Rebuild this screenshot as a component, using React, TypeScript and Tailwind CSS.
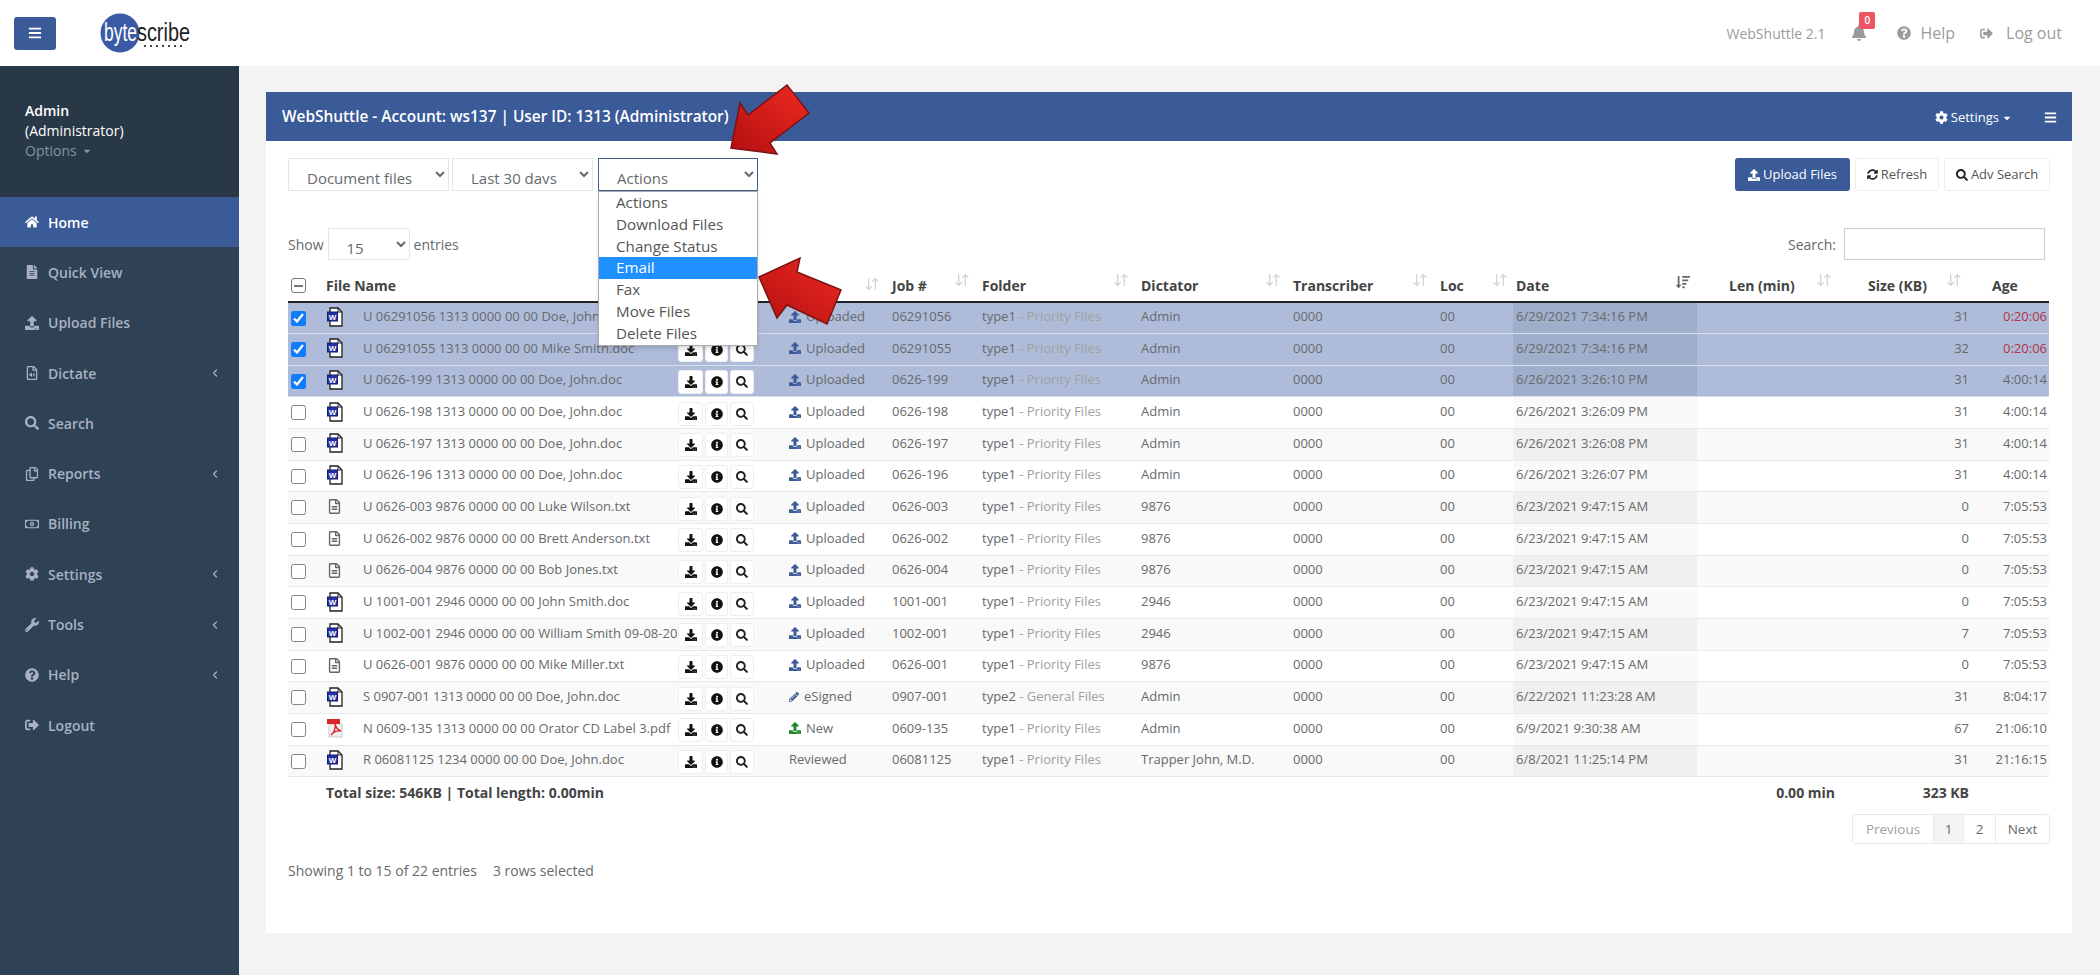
import React from 'react'
import { ArrowDownUp, ChevronLeft } from 'lucide-react'
import {
  FaBars, FaBell, FaCaretDown, FaCog, FaDownload, FaFileAlt, FaHome, FaInfoCircle, FaPencilAlt,
  FaQuestionCircle, FaRegCopy, FaRegFileAlt, FaRegFileAudio, FaRegMoneyBillAlt, FaSearch, FaSignOutAlt,
  FaSortAmountDown, FaSyncAlt, FaUpload, FaWrench,
} from 'react-icons/fa'

const menu = [
  { label: 'Home', icon: FaHome, active: true },
  { label: 'Quick View', icon: FaFileAlt },
  { label: 'Upload Files', icon: FaUpload },
  { label: 'Dictate', icon: FaRegFileAudio, sub: true },
  { label: 'Search', icon: FaSearch },
  { label: 'Reports', icon: FaRegCopy, sub: true },
  { label: 'Billing', icon: FaRegMoneyBillAlt },
  { label: 'Settings', icon: FaCog, sub: true },
  { label: 'Tools', icon: FaWrench, sub: true },
  { label: 'Help', icon: FaQuestionCircle, sub: true },
  { label: 'Logout', icon: FaSignOutAlt },
]

type Row = {
  name: string
  kind: 'doc' | 'txt' | 'pdf'
  status: string
  job: string
  type: string
  dictator: string
  transcriber: string
  date: string
  size: string
  age: string
  selected?: boolean
}

const rows: Row[] = [
  { name: 'U 06291056 1313 0000 00 00 Doe, John.doc', kind: 'doc', status: 'Uploaded', job: '06291056', type: 'type1 ', dictator: 'Admin', transcriber: '0000', date: '6/29/2021 7:34:16 PM', size: '31', age: '0:20:06', selected: true },
  { name: 'U 06291055 1313 0000 00 00 Mike Smith.doc', kind: 'doc', status: 'Uploaded', job: '06291055', type: 'type1 ', dictator: 'Admin', transcriber: '0000', date: '6/29/2021 7:34:16 PM', size: '32', age: '0:20:06', selected: true },
  { name: 'U 0626-199 1313 0000 00 00 Doe, John.doc', kind: 'doc', status: 'Uploaded', job: '0626-199', type: 'type1 ', dictator: 'Admin', transcriber: '0000', date: '6/26/2021 3:26:10 PM', size: '31', age: '4:00:14', selected: true },
  { name: 'U 0626-198 1313 0000 00 00 Doe, John.doc', kind: 'doc', status: 'Uploaded', job: '0626-198', type: 'type1 ', dictator: 'Admin', transcriber: '0000', date: '6/26/2021 3:26:09 PM', size: '31', age: '4:00:14' },
  { name: 'U 0626-197 1313 0000 00 00 Doe, John.doc', kind: 'doc', status: 'Uploaded', job: '0626-197', type: 'type1 ', dictator: 'Admin', transcriber: '0000', date: '6/26/2021 3:26:08 PM', size: '31', age: '4:00:14' },
  { name: 'U 0626-196 1313 0000 00 00 Doe, John.doc', kind: 'doc', status: 'Uploaded', job: '0626-196', type: 'type1 ', dictator: 'Admin', transcriber: '0000', date: '6/26/2021 3:26:07 PM', size: '31', age: '4:00:14' },
  { name: 'U 0626-003 9876 0000 00 00 Luke Wilson.txt', kind: 'txt', status: 'Uploaded', job: '0626-003', type: 'type1 ', dictator: '9876', transcriber: '0000', date: '6/23/2021 9:47:15 AM', size: '0', age: '7:05:53' },
  { name: 'U 0626-002 9876 0000 00 00 Brett Anderson.txt', kind: 'txt', status: 'Uploaded', job: '0626-002', type: 'type1 ', dictator: '9876', transcriber: '0000', date: '6/23/2021 9:47:15 AM', size: '0', age: '7:05:53' },
  { name: 'U 0626-004 9876 0000 00 00 Bob Jones.txt', kind: 'txt', status: 'Uploaded', job: '0626-004', type: 'type1 ', dictator: '9876', transcriber: '0000', date: '6/23/2021 9:47:15 AM', size: '0', age: '7:05:53' },
  { name: 'U 1001-001 2946 0000 00 00 John Smith.doc', kind: 'doc', status: 'Uploaded', job: '1001-001', type: 'type1 ', dictator: '2946', transcriber: '0000', date: '6/23/2021 9:47:15 AM', size: '0', age: '7:05:53' },
  { name: 'U 1002-001 2946 0000 00 00 William Smith 09-08-2021.doc', kind: 'doc', status: 'Uploaded', job: '1002-001', type: 'type1 ', dictator: '2946', transcriber: '0000', date: '6/23/2021 9:47:15 AM', size: '7', age: '7:05:53' },
  { name: 'U 0626-001 9876 0000 00 00 Mike Miller.txt', kind: 'txt', status: 'Uploaded', job: '0626-001', type: 'type1 ', dictator: '9876', transcriber: '0000', date: '6/23/2021 9:47:15 AM', size: '0', age: '7:05:53' },
  { name: 'S 0907-001 1313 0000 00 00 Doe, John.doc', kind: 'doc', status: 'eSigned', job: '0907-001', type: 'type2 ', dictator: 'Admin', transcriber: '0000', date: '6/22/2021 11:23:28 AM', size: '31', age: '8:04:17' },
  { name: 'N 0609-135 1313 0000 00 00 Orator CD Label 3.pdf', kind: 'pdf', status: 'New', job: '0609-135', type: 'type1 ', dictator: 'Admin', transcriber: '0000', date: '6/9/2021 9:30:38 AM', size: '67', age: '21:06:10' },
  { name: 'R 06081125 1234 0000 00 00 Doe, John.doc', kind: 'doc', status: 'Reviewed', job: '06081125', type: 'type1 ', dictator: 'Trapper John, M.D.', transcriber: '0000', date: '6/8/2021 11:25:14 PM', size: '31', age: '21:16:15' },
]

function WordIcon() {
  return (
    <svg width="18" height="20" viewBox="0 0 18 20">
      <path d="M4 1h8l4 4v14H4z" fill="#fff" stroke="#222" strokeWidth="1.3" />
      <path d="M12 1v4h4" fill="none" stroke="#222" strokeWidth="1" />
      <rect x="1.5" y="5" width="10" height="9" fill="#2231a8" stroke="#141c6b" />
      <text x="6.5" y="12.5" textAnchor="middle" fontSize="8" fontWeight="700" fill="#fff" fontFamily="Liberation Sans, sans-serif">W</text>
    </svg>
  )
}

function PdfIcon() {
  return (
    <svg width="18" height="20" viewBox="0 0 18 20">
      <path d="M3 6h13v13H3z" fill="#f1f1f1" stroke="#c9c9c9" />
      <rect x="1" y="1" width="13" height="5" fill="#d8262c" />
      <path d="M5 17c3-2 5-7 4-11 1 4 3 6 6 7-3-.5-7 .5-10 4z" fill="none" stroke="#d8262c" strokeWidth="1.4" />
    </svg>
  )
}

function FileIcon({ kind }: { kind: Row['kind'] }) {
  if (kind === 'doc') return <WordIcon />
  if (kind === 'pdf') return <PdfIcon />
  return <FaRegFileAlt className="text-[15px] text-[#666] ml-[1px]" />
}

function SortIcon() {
  return <ArrowDownUp size={16} strokeWidth={2} className="text-[#d2d2d2] -mt-[3px]" />
}

function Checkbox({ checked }: { checked?: boolean }) {
  return <input type="checkbox" defaultChecked={checked} className="block w-[15px] h-[15px] accent-[#0075ff] opacity-90" />
}

function StatusCell({ status }: { status: string }) {
  return (
    <span className="flex items-center gap-[5px] pl-[8px] pb-[2px]">
      {status === 'Uploaded' && <FaUpload className="text-[12px] text-[#3a5a98]" />}
      {status === 'New' && <FaUpload className="text-[12px] text-[#1e8a2a]" />}
      {status === 'eSigned' && <FaPencilAlt className="text-[10px] text-[#3a5a98]" />}
      {status}
    </span>
  )
}

function ActionButtons() {
  return (
    <div className="flex gap-[2px] pt-[2px] pl-[1px]">
      <span className="w-[25px] h-[24px] flex items-center justify-center bg-white border border-[#eeeeee] rounded-[3px]">
        <FaDownload className="text-[12px] text-[#111]" />
      </span>
      <span className="w-[23px] h-[24px] flex items-center justify-center bg-white border border-[#eeeeee] rounded-[3px]">
        <FaInfoCircle className="text-[12px] text-[#111]" />
      </span>
      <span className="w-[24px] h-[24px] flex items-center justify-center bg-white border border-[#eeeeee] rounded-[3px]">
        <FaSearch className="text-[12px] text-[#222]" />
      </span>
    </div>
  )
}

function Logo() {
  return (
    <svg width="92" height="44" viewBox="0 0 92 44">
      <circle cx="20" cy="22" r="19.5" fill="#3a5aa5" />
      <text x="4" y="30" textLength="33" lengthAdjust="spacingAndGlyphs" fontSize="25" fill="#fff" fontFamily="Liberation Sans, sans-serif">byte</text>
      <text x="37" y="30" textLength="53" lengthAdjust="spacingAndGlyphs" fontSize="25" fill="#222" fontFamily="Liberation Sans, sans-serif">scribe</text>
      {[44, 50, 56, 62, 68, 74, 80].map((x) => (
        <rect key={x} x={x} y="34" width="2" height="2" fill="#444" />
      ))}
    </svg>
  )
}

export default function App() {
  return (
    <div className="relative w-[2100px] h-[975px] overflow-hidden bg-[#f3f3f4] text-[13px] text-[#676a6c]" style={{ fontFamily: '"Open Sans", sans-serif' }}>
      <header className="h-[66px] bg-white flex items-center justify-between pl-[14px] pr-[38px]">
        <div className="flex items-center gap-[44px]">
          <button className="w-[42px] h-[33px] bg-[#3a5a98] rounded-[3px] flex items-center justify-center text-white">
            <FaBars className="text-[14px]" />
          </button>
          <Logo />
        </div>
        <div className="flex items-center text-[#999c9e]">
          <span className="text-[14px]">WebShuttle 2.1</span>
          <span className="relative ml-[26px] mr-[30px]">
            <FaBell className="text-[16px]" />
            <span className="absolute -top-[13px] left-[8px] w-[16px] h-[17px] rounded-[2px] bg-[#ed5565] text-white text-[10px] font-semibold flex items-center justify-center">0</span>
          </span>
          <FaQuestionCircle className="text-[14px]" />
          <span className="text-[16px] ml-[9px]">Help</span>
          <FaSignOutAlt className="text-[13px] ml-[25px]" />
          <span className="text-[16px] ml-[13px]">Log out</span>
        </div>
      </header>

      <div className="flex h-[909px]">
        <aside className="w-[239px] bg-[#2f4154] shrink-0">
          <div className="h-[131px] bg-[#293846] pl-[25px] pt-[35px] text-[14px] leading-[20px]">
            <div className="font-semibold text-white">Admin</div>
            <div className="font-medium text-white">(Administrator)</div>
            <div className="text-[#8095a8] flex items-center gap-[5px]">Options <FaCaretDown className="text-[10px]" /></div>
          </div>
          <nav>
            {menu.map((item) => (
              <div key={item.label} className={`h-[50.3px] flex items-center pl-[25px] pr-[18px] font-semibold text-[14px] ${item.active ? 'bg-[#3a5a98] text-white' : 'text-[#a7b1c2]'}`}>
                <item.icon className="text-[14px] w-[14px] mr-[9px]" />
                <span className="flex-1">{item.label}</span>
                {item.sub && <ChevronLeft size={12} strokeWidth={2.5} />}
              </div>
            ))}
          </nav>
        </aside>

        <main className="flex-1 pt-[26px] pl-[27px] pr-[28px]">
          <div className="h-[49px] bg-[#3a5a98] text-white flex items-center justify-between pl-[16px] pr-[15px]">
            <span className="text-[15.4px] font-semibold">WebShuttle - Account: ws137 | User ID: 1313 (Administrator)</span>
            <div className="flex items-center pt-[2px]">
              <FaCog className="text-[13px] mr-[3px]" />
              <span className="text-[13px]">Settings</span>
              <FaCaretDown className="text-[10px] ml-[3px]" />
              <FaBars className="text-[13px] ml-[32px]" />
            </div>
          </div>

          <div className="h-[792px] bg-white px-[22px] pt-[17px]">
            <div className="flex justify-between h-[33px]">
              <div className="flex">
                <select className="w-[161px] h-[33px] border border-[#e5e6e7] pl-[14px] pt-[8px] pb-[6px] text-[15px] bg-white">
                  <option>Document files</option>
                </select>
                <select className="w-[141px] h-[33px] ml-[3px] border border-[#e5e6e7] pl-[14px] pt-[8px] pb-[6px] text-[15px] bg-white">
                  <option>Last 30 days</option>
                </select>
                <div className="relative ml-[5px]">
                  <select className="w-[160px] h-[33px] border border-[#3f5f8f] pl-[14px] pt-[8px] pb-[6px] text-[15px] bg-white">
                    <option>Actions</option>
                  </select>
                  <div className="absolute z-10 top-[33px] left-0 w-[160px] bg-white border border-[#aaaaaa] shadow-md text-[15.2px] leading-[21.8px] text-[#555]">
                    {['Actions', 'Download Files', 'Change Status', 'Email', 'Fax', 'Move Files', 'Delete Files'].map((o) => (
                      <div key={o} className={`pl-[17px] ${o === 'Email' ? 'bg-[#1e90ff] text-white' : ''}`}>{o}</div>
                    ))}
                  </div>
                </div>
              </div>
              <div className="flex gap-[5px] text-[13px]">
                <button className="w-[115px] rounded-[3px] bg-[#3a5a98] text-white flex items-center justify-center gap-[3px]">
                  <FaUpload className="text-[12px]" /> Upload Files
                </button>
                <button className="w-[84px] rounded-[3px] border border-[#eeeeee] text-[#555] flex items-center justify-center gap-[3px]">
                  <FaSyncAlt className="text-[11px] text-[#222]" /> Refresh
                </button>
                <button className="w-[106px] rounded-[3px] border border-[#eeeeee] text-[#555] flex items-center justify-center gap-[3px]">
                  <FaSearch className="text-[12px] text-[#222]" /> Adv Search
                </button>
              </div>
            </div>

            <div className="flex justify-between items-center h-[32px] mt-[37px] pr-[5px] text-[14px]">
              <div className="flex items-center">
                Show
                <select className="w-[82px] h-[32px] mx-[4px] border border-[#e5e6e7] pl-[14px] pt-[7px] text-[15px] bg-white">
                  <option>15</option>
                </select>
                entries
              </div>
              <div className="flex items-center gap-[8px]">
                Search:
                <input className="w-[201px] h-[32px] border border-[#cccccc]" />
              </div>
            </div>

            <table className="table-fixed w-[1761px] mt-[10px] border-collapse">
              <colgroup>
                <col className="w-[38px]" />
                <col className="w-[37px]" />
                <col className="w-[314px]" />
                <col className="w-[104px]" />
                <col className="w-[104px]" />
                <col className="w-[90px]" />
                <col className="w-[159px]" />
                <col className="w-[152px]" />
                <col className="w-[147px]" />
                <col className="w-[80px]" />
                <col className="w-[184px]" />
                <col className="w-[163px]" />
                <col className="w-[115px]" />
                <col className="w-[74px]" />
              </colgroup>
              <thead>
                <tr className="h-[32px] border-b-2 border-[#222] text-[#444] text-left text-[14px]">
                  <th className="pl-[3px]">
                    <span className="w-[15px] h-[15px] rounded-[3px] border border-[#777] flex items-center justify-center">
                      <span className="w-[9px] h-[2px] bg-[#777]" />
                    </span>
                  </th>
                  <th colSpan={2} className="font-bold">File Name</th>
                  <th />
                  <th className="font-bold"><span className="flex justify-end pr-[5px]"><SortIcon /></span></th>
                  {['Job #', 'Folder', 'Dictator', 'Transcriber', 'Loc'].map((label) => (
                    <th key={label} className="font-bold pl-[7px]">
                      <span className="flex justify-between items-start pr-[5px]">{label}<SortIcon /></span>
                    </th>
                  ))}
                  <th className="font-bold pl-[3px]">
                    <span className="flex justify-between pr-[7px]">Date<FaSortAmountDown className="text-[14px] text-[#666]" /></span>
                  </th>
                  <th className="font-bold pl-[32px]">
                    <span className="flex justify-between items-start pr-[28px]">Len (min)<SortIcon /></span>
                  </th>
                  <th className="font-bold pl-[8px]">
                    <span className="flex justify-between items-start pr-[13px]">Size (KB)<SortIcon /></span>
                  </th>
                  <th className="font-bold pl-[17px]">Age</th>
                </tr>
              </thead>
              <tbody>
                {rows.map((r, i) => (
                  <tr key={r.job} className={`h-[31.67px] border-b whitespace-nowrap ${r.selected ? 'bg-[#aebcd9] border-[#d8dfec]' : i % 2 === 0 ? 'bg-[#f9f9f9] border-[#e7eaec]' : 'bg-white border-[#e7eaec]'}`}>
                    <td className="pl-[3px]"><Checkbox checked={r.selected} /></td>
                    <td className="pb-[2px]"><FileIcon kind={r.kind} /></td>
                    <td className="overflow-hidden pb-[2px]">{r.name}</td>
                    <td><ActionButtons /></td>
                    <td><StatusCell status={r.status} /></td>
                    <td className="pl-[7px] pb-[2px]">{r.job}</td>
                    <td className="pl-[7px] pb-[2px]">{r.type}<span className="text-[#a0a0a0]">- {r.type === 'type1 ' ? 'Priority Files' : 'General Files'}</span></td>
                    <td className="pl-[7px] pb-[2px]">{r.dictator}</td>
                    <td className="pl-[7px] pb-[2px]">{r.transcriber}</td>
                    <td className="pl-[7px] pb-[2px]">00</td>
                    <td className={`pl-[3px] pb-[2px] ${r.selected ? 'bg-[#9fafcb]' : i % 2 === 0 ? 'bg-[#f0f0f0]' : 'bg-[#fafafa]'}`}>{r.date}</td>
                    <td />
                    <td className="text-right pr-[6px] pb-[2px]">{r.size}</td>
                    <td className={`text-right pr-[2px] pb-[2px] ${r.age === '0:20:06' ? 'text-[#b0353f]' : ''}`}>{r.age}</td>
                  </tr>
                ))}
              </tbody>
              <tfoot>
                <tr className="h-[31px] font-bold text-[#444] text-[14px]">
                  <td />
                  <td colSpan={10}>Total size: 546KB | Total length: 0.00min</td>
                  <td className="text-right pr-[25px]">0.00 min</td>
                  <td className="text-right pr-[6px]">323 KB</td>
                  <td />
                </tr>
              </tfoot>
            </table>

            <div className="flex justify-end mt-[6px]">
              <div className="flex h-[30px] border border-[#e7eaec] rounded-[3px] items-center text-[13.5px]">
                <span className="w-[80px] h-full flex items-center justify-center text-[#a0a0a0]">Previous</span>
                <span className="w-[31px] h-full flex items-center justify-center bg-[#f4f4f4] border-x border-[#e7eaec]">1</span>
                <span className="w-[31px] h-full flex items-center justify-center">2</span>
                <span className="w-[54px] h-full flex items-center justify-center border-l border-[#e7eaec]">Next</span>
              </div>
            </div>
            <div className="mt-[16px] text-[14px]">Showing 1 to 15 of 22 entries<span className="ml-[16px]">3 rows selected</span></div>
          </div>
        </main>
      </div>

      <svg className="absolute top-0 left-0 z-20 pointer-events-none" width="900" height="340">
        <defs>
          <linearGradient id="arrowRed" x1="1" y1="0" x2="0" y2="1">
            <stop offset="0" stopColor="#ee2a22" />
            <stop offset="1" stopColor="#b30f10" />
          </linearGradient>
        </defs>
        <polygon points="731,148 740,103 748,115 787,85 809,113 770,143 777,154" fill="url(#arrowRed)" stroke="#7a1414" strokeWidth="1.5" />
        <polygon points="759,277 800,258 797,272 841,290 827,324 787,305 777,318" fill="url(#arrowRed)" stroke="#7a1414" strokeWidth="1.5" />
      </svg>
    </div>
  )
}
